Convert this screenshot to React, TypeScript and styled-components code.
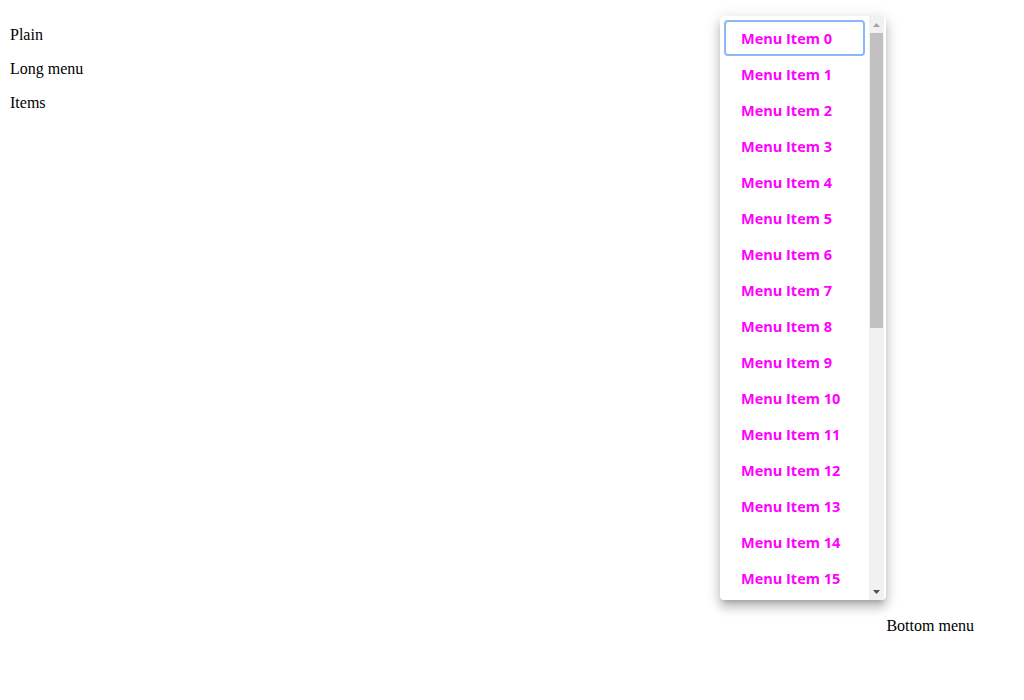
import { createGlobalStyle } from "styled-components";
import styled from "styled-components";

const GlobalStyle = createGlobalStyle`
  body {
    margin: 8px;
    font-family: "Liberation Serif", "Times New Roman", serif;
    font-size: 16px;
    color: #000;
    background: #fff;
  }
`;

const items = Array.from({ length: 16 }, (_, i) => `Menu Item ${i}`);

function App() {
  return (
    <Page>
      <GlobalStyle />
      <Labels>
        <Label>Plain</Label>
        <Label>Long menu</Label>
        <Label>Items</Label>
      </Labels>
      <BottomRow>
        <Label>Bottom menu</Label>
      </BottomRow>
      <Menu>
        <MenuList>
          {items.map((item, i) => (
            <MenuItem key={item} focused={i === 0}>
              {item}
            </MenuItem>
          ))}
        </MenuList>
        <ScrollBar>
          <ArrowButton>
            <svg width="7" height="4" viewBox="0 0 7 4">
              <path d="M0 4 L3.5 0 L7 4 Z" fill="#a3a3a3" />
            </svg>
          </ArrowButton>
          <Track>
            <Thumb />
          </Track>
          <ArrowButton>
            <svg width="7" height="4" viewBox="0 0 7 4">
              <path d="M0 0 L7 0 L3.5 4 Z" fill="#505050" />
            </svg>
          </ArrowButton>
        </ScrollBar>
      </Menu>
    </Page>
  );
}

export default App;

const Page = styled.div`
  display: flex;
  flex-direction: column;
  height: 684px;
`;

const Labels = styled.div`
  display: flex;
  flex-direction: column;
  gap: 16px;
  padding: 18px 0 0 2px;
`;

const Label = styled.div`
  line-height: 18px;
`;

const BottomRow = styled.div`
  margin-top: auto;
  display: flex;
  justify-content: flex-end;
  padding: 0 42px 57px 0;
`;

const Menu = styled.div`
  position: absolute;
  left: 720px;
  top: 16px;
  width: 166px;
  height: 584px;
  display: flex;
  background: #fff;
  border-radius: 4px;
  box-shadow: 0 5px 5px -3px rgba(0, 0, 0, 0.2), 0 8px 10px 1px rgba(0, 0, 0, 0.14),
    0 3px 14px 2px rgba(0, 0, 0, 0.12);
  overflow: hidden;
`;

const MenuList = styled.ul`
  list-style: none;
  margin: 0;
  flex: 1;
  box-sizing: border-box;
  padding: 4px;
  overflow: hidden;
`;

const MenuItem = styled.li<{ focused: boolean }>`
  display: flex;
  align-items: center;
  height: 36px;
  box-sizing: border-box;
  padding-left: 15px;
  font-family: "Open Sans", "Noto Sans", sans-serif;
  font-weight: 700;
  font-size: 14.5px;
  color: #ff00ff;
  white-space: nowrap;
  border: 2px solid ${(props) => (props.focused ? "#8ab8f8" : "transparent")};
  border-radius: 4px;
`;

const ScrollBar = styled.div`
  width: 15px;
  margin-right: 2px;
  display: flex;
  flex-direction: column;
  background: #f1f1f1;
`;

const ArrowButton = styled.div`
  height: 17px;
  display: flex;
  align-items: center;
  justify-content: center;
`;

const Track = styled.div`
  flex: 1;
  padding: 0 1px;
`;

const Thumb = styled.div`
  height: 295px;
  background: #c1c1c1;
`;
